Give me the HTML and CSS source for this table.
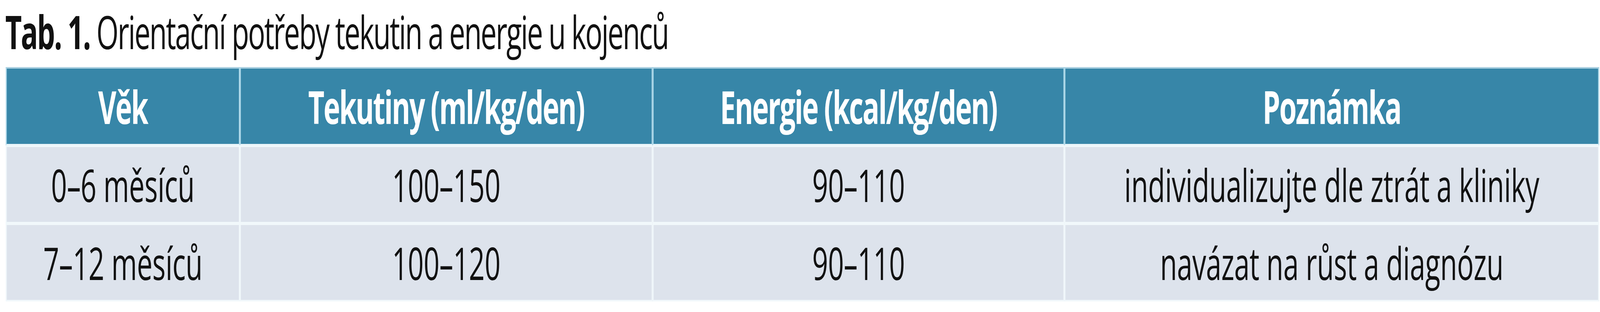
FILE: index.html
```html
<!DOCTYPE html>
<html lang="cs">
<head>
<meta charset="utf-8">
<title>Tab. 1</title>
<link rel="stylesheet" href="styles.css">
</head>
<body>
<div class="frame">
  <div class="page">
    <div class="title"><b>Tab. 1.</b> Orientační potřeby tekutin a energie u kojenců</div>
    <table class="grid">
      <colgroup>
        <col class="c1"><col class="c2"><col class="c3"><col class="c4">
      </colgroup>
      <thead>
        <tr><th>Věk</th><th>Tekutiny (ml/kg/den)</th><th>Energie (kcal/kg/den)</th><th>Poznámka</th></tr>
      </thead>
      <tbody>
        <tr><td>0–6 měsíců</td><td>100–150</td><td>90–110</td><td>individualizujte dle ztrát a kliniky</td></tr>
        <tr><td>7–12 měsíců</td><td>100–120</td><td>90–110</td><td>navázat na růst a diagnózu</td></tr>
      </tbody>
    </table>
  </div>
</div>
<script src="fit.js"></script>
</body>
</html>
```

FILE: fit.js
```js
(function () {
  var sx = Math.min(1, window.innerWidth / 6617);
  document.documentElement.style.setProperty('--sx', String(sx));
})();
```

FILE: styles.css
```css
html, body {
  margin: 0;
  padding: 0;
  background: #ffffff;
  overflow: hidden;
}
.frame {
  width: 100%;
  height: 800px;
  overflow: hidden;
  contain: paint;
}
.page {
  width: 6617px;
  height: 800px;
  padding: 0 0 0 24px;
  box-sizing: border-box;
  font-family: "Open Sans", "Noto Sans", sans-serif;
  color: #111111;
  transform: scaleX(var(--sx, 1));
  transform-origin: 0 0;
}
.title {
  font-size: 118px;
  line-height: 161px;
  height: 161px;
  margin: 0 0 11px -2px;
  white-space: nowrap;
  letter-spacing: -4.2px;
}
.title b {
  font-weight: 700;
}
.grid {
  border-collapse: separate;
  border-spacing: 0;
  table-layout: fixed;
  width: 6589px;
}
.c1 { width: 968px; }
.c2 { width: 1707px; }
.c3 { width: 1703px; }
.c4 { width: 2211px; }
.grid th, .grid td {
  padding: 0;
  text-align: center;
  vertical-align: middle;
  white-space: nowrap;
  box-sizing: border-box;
}
.grid th {
  background: #3786a8;
  color: #ffffff;
  font-weight: 700;
  font-size: 116px;
  letter-spacing: -4px;
  height: 201px;
  border: 4px solid #b3dcec;
  border-bottom-color: #e9f5fa;
  border-top-color: #a9cfe0;
}
.grid td {
  background: #dde3ec;
  font-size: 115px;
  letter-spacing: -0.6px;
  font-weight: 400;
  height: 200px;
  border: 4px solid #f1f8fb;
}
```
